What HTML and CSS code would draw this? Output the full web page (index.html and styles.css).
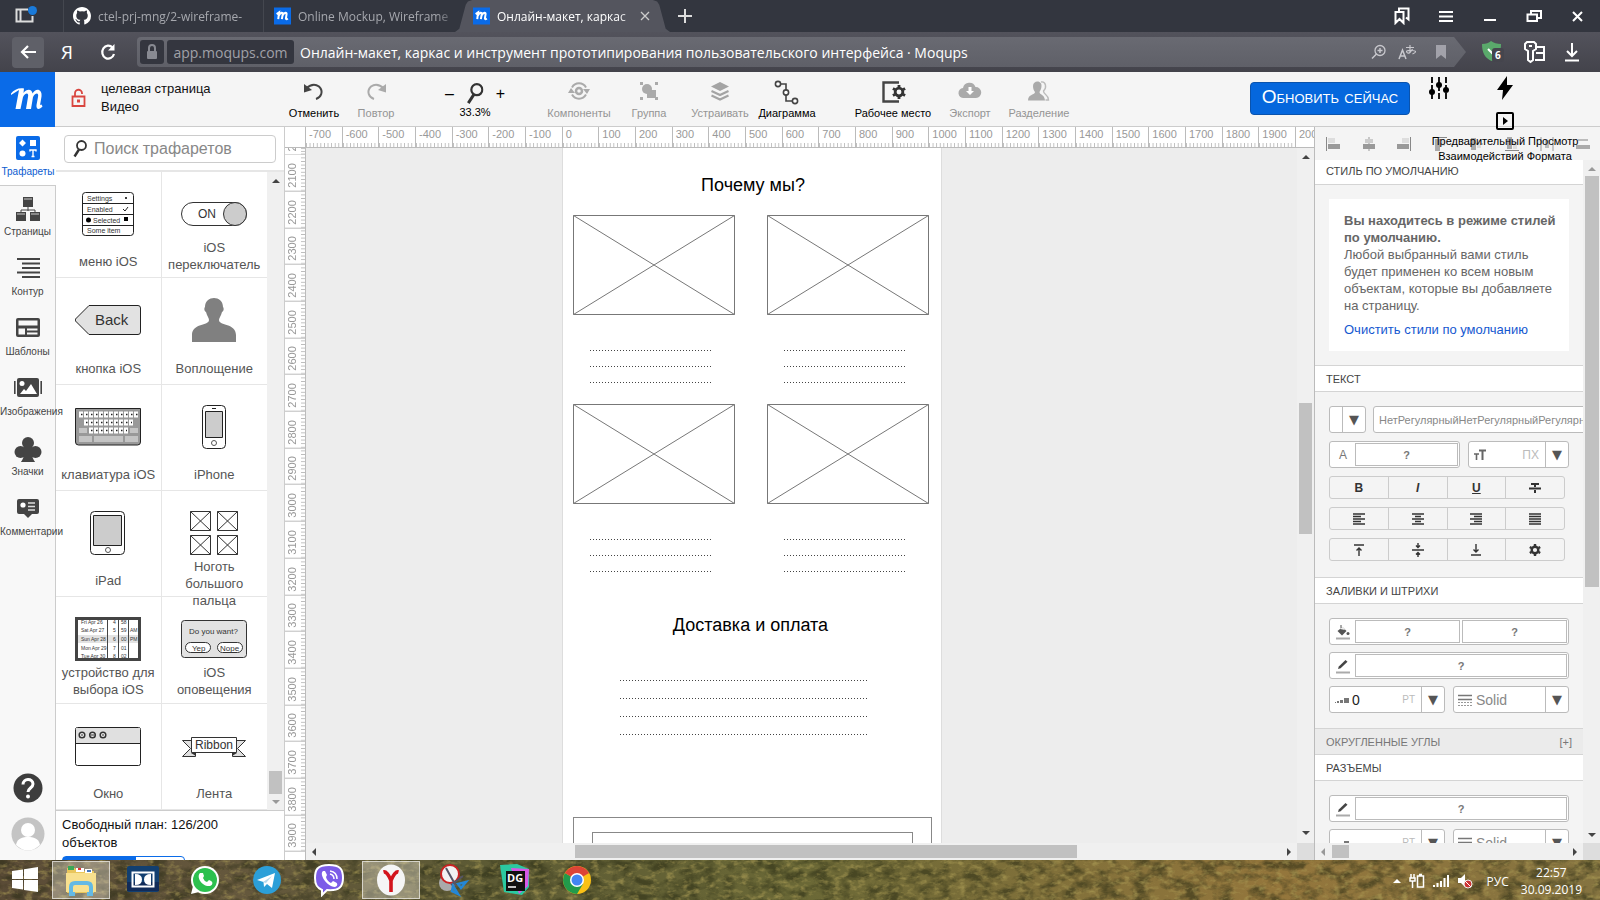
FILE: index.html
```html
<!DOCTYPE html>
<html lang="ru">
<head>
<meta charset="utf-8">
<title>Онлайн-макет · Moqups</title>
<link rel="stylesheet" href="styles.css">
</head>
<body>
<svg class="defs" aria-hidden="true">
  <symbol id="m" viewBox="0 0 16 16"><rect width="16" height="16" fill="#0a6be8"/><path d="M2.5 6.2 4.8 4.6 4 11M4.6 7.5C6 4.5 8.600 4 8.200 6.500L7.400 11M8.200 7.200C10 4.300 12.200 4.300 11.800 6.500L11.200 10.300Q11.400 11.600 13 10.300" fill="none" stroke="#fff" stroke-width="1.900"/></symbol>
  <symbol id="pencil" viewBox="0 0 14 16"><path d="M2 11l.8-2.600L9.500 2l2 1.800L4.600 10.300z" fill="#444"/><path d="M0 14.500h14" stroke="#aaa" stroke-width="2"/></symbol>
  <symbol id="weight" viewBox="0 0 14 8"><path d="M0 6h1v1H0zM2 5h2v2H2zM5 4h3v3H5zM9 2h5v5H9z" fill="#777"/></symbol>
  <symbol id="dash" viewBox="0 0 14 12"><path d="M0 1.500h14M0 5.500h14" stroke="#777" stroke-width="1.500"/><path d="M0 8.500h14M0 11.500h14" stroke="#999" stroke-dasharray="2 1"/></symbol>
  <symbol id="xbox" viewBox="0 0 162 100"><path d="M.5.5h161v99H.5zL161.500 99.500M161.500.5.5 99.500" fill="none" stroke="#777"/></symbol>
  <symbol id="lupa" viewBox="0 0 14 18"><circle cx="8.500" cy="5.500" r="4.500" fill="none" stroke="#333" stroke-width="1.800"/><path d="M6 9.500 1.500 16.500" stroke="#333" stroke-width="2.400"/></symbol>
  <symbol id="gear" viewBox="0 0 12 12"><circle cx="6" cy="6" r="3.300" fill="none" stroke="#333" stroke-width="2.400"/><path d="M6 0v2M6 10v2M.8 3l1.700 1M9.500 8l1.700 1M.8 9l1.700-1M9.500 4l1.700-1" stroke="#333" stroke-width="2.400"/></symbol>
</svg>

<header class="tabs">
  <button class="panel-btn" aria-label="Панель"><svg width="24" height="20"><path d="M14 3.500H2.500v12h16V10M6.500 4v11" fill="none" stroke="#ddd" stroke-width="2"/><circle cx="18.500" cy="4.500" r="4.500" fill="#1a7ad9"/></svg></button>
  <a class="tab first" href="#"><svg width="18" height="18" viewBox="0 0 16 16"><path fill="#fff" d="M8 0C3.580 0 0 3.580 0 8c0 3.540 2.290 6.530 5.470 7.590.4.070.55-.17.55-.38v-1.490c-2.230.48-2.700-1.070-2.700-1.070-.36-.92-.89-1.170-.89-1.170-.73-.5.060-.49.060-.49.800.060 1.230.82 1.230.82.710 1.230 1.870.87 2.330.67.070-.52.280-.87.500-1.070-1.780-.2-3.640-.89-3.640-3.950 0-.87.310-1.590.82-2.150-.08-.2-.36-1.020.08-2.120 0 0 .67-.21 2.200.82a7.600 7.600 0 0 1 4 0c1.530-1.040 2.200-.82 2.200-.82.440 1.100.16 1.920.080 2.120.51.56.82 1.270.82 2.150 0 3.070-1.870 3.750-3.650 3.950.29.250.54.730.54 1.480v2.200c0 .21.150.46.550.38A8 8 0 0 0 16 8c0-4.420-3.580-8-8-8z"/></svg><span>ctel-prj-mng/2-wireframe-</span></a>
  <a class="tab second" href="#"><svg width="17" height="20"><use href="#m"/></svg><span>Online Mockup, Wireframe</span></a>
  <div class="tab active"><svg width="17" height="20"><use href="#m"/></svg><span>Онлайн-макет, каркас</span><button aria-label="Закрыть вкладку"><svg width="10" height="10"><path d="M1 1l8 8M9 1l-8 8" stroke="#ccc" stroke-width="1.300"/></svg></button></div>
  <button class="plus" aria-label="Новая вкладка"><svg width="16" height="16"><path d="M8 1v14M1 8h14" stroke="#ddd" stroke-width="2"/></svg></button>
  <div class="win">
    <button aria-label="Закладки"><svg width="16" height="18"><path d="M5 4V1.500h9.500v11L12 10.500M1.500 5h8v11l-4-4-4 4z" fill="none" stroke="#fff" stroke-width="2"/></svg></button>
    <button aria-label="Меню"><svg width="16" height="18"><path d="M1 5h14M1 9.500h14M1 14h14" stroke="#fff" stroke-width="2"/></svg></button>
    <button aria-label="Свернуть"><svg width="16" height="18"><path d="M2 13h12" stroke="#fff" stroke-width="2"/></svg></button>
    <button aria-label="Восстановить"><svg width="16" height="18"><path d="M5 7V4h10v7h-3M1.500 7.500H11V14H1.500z" fill="none" stroke="#fff" stroke-width="2"/></svg></button>
    <button aria-label="Закрыть"><svg width="16" height="18"><path d="M3 5l9 9M12 5l-9 9" stroke="#fff" stroke-width="2"/></svg></button>
  </div>
</header>

<nav class="address">
  <button class="back" aria-label="Назад"><svg width="18" height="16"><path d="M9 2 3 8l6 6M3 8h14" fill="none" stroke="#fff" stroke-width="2.200"/></svg></button>
  <button class="ya" aria-label="Яндекс">Я</button>
  <button class="reload" aria-label="Обновить"><svg width="18" height="20"><path d="M13.500 5.500A6 6.500 0 1 0 15 12" fill="none" stroke="#fff" stroke-width="2.200"/><path d="M15.500 2v6.500H9z" fill="#fff"/></svg></button>
  <div class="url">
    <span class="lock"><svg width="12" height="16"><path d="M3 7V4a3 3 0 0 1 6 0v3" fill="none" stroke="#888a92" stroke-width="2"/><rect x="1" y="7" width="10" height="8" rx="1" fill="#888a92"/></svg></span>
    <span class="domain">app.moqups.com</span>
    <span class="url-title">Онлайн-макет, каркас и инструмент прототипирования пользовательского интерфейса · Moqups</span>
    <svg width="16" height="16"><circle cx="9" cy="6.500" r="5" fill="none" stroke="#c8c8cd" stroke-width="1.300"/><path d="M9 4v5M6.500 6.500h5M5.500 10 1 14.500" stroke="#c8c8cd" stroke-width="1.500"/></svg>
    <svg class="translate" width="18" height="16"><path d="M1 15 4.500 6 8 15M2.200 12h4.600" fill="none" stroke="#c8c8cd" stroke-width="1.500"/><path d="M8 3.500h8M12 1v8M14.500 5Q11 11 9 8.500T14 6.500 14.500 10" fill="none" stroke="#c8c8cd" stroke-width="1.200"/></svg>
    <svg width="10" height="14"><path d="M0 0h10v14l-5-4-5 4z" fill="#a2a2aa"/></svg>
  </div>
  <div class="ext">
    <svg width="26" height="24"><path d="M2 4Q8 4 11 1q4 3 10 3c0 9-3 14-9.500 17C5 18 2 13 2 4z" fill="#5aa96b"/><path d="m8 9 4 4 4-4" fill="none" stroke="#fff" stroke-width="2"/><rect x="12" y="8" width="12" height="14" rx="3" fill="#45454d"/><text x="15" y="19" class="badge">6</text></svg>
    <svg width="24" height="24"><path d="M4 2h7l2 2v5l-3 2v9l-2.500 2L5 20v-9L2 9V4zM6 6h3M13 7h8v13h-9M13 13h8" fill="none" stroke="#fff" stroke-width="2"/></svg>
    <svg width="16" height="20"><path d="M8 1v13M3 9l5 5 5-5M1 18.500h14" fill="none" stroke="#fff" stroke-width="2"/></svg>
  </div>
</nav>

<div class="toolbar">
  <a class="logo" href="#" aria-label="Moqups"><svg width="55" height="55" viewBox="0 0 55 55"><path d="M11 23l8-5-3.500 19h5L23 25c3-5 6-4 5 0l-2 12h5l2-12c3-5 6-4 5 0l-1.500 8c-.5 5 3 5 6 1.500l-1-2c-1.500 1-1.500 0-1-2l1-6c1-8-6-9-9-3-.5-5-6-5-9-.5l.5-4.500c-5-1-10 1-13 5z" fill="#fff"/></svg></a>
  <svg class="padlock" width="16" height="20"><path d="M4 8.500V5.500a3.500 3.500 0 0 1 7-.5v1M1.500 8.500h12V18h-12z" fill="none" stroke="#d9463f" stroke-width="1.800"/><rect x="6" y="11.500" width="3" height="3" fill="#d9463f"/></svg>
  <div class="doc"><div>целевая страница</div><div>Видео</div></div>
  <button class="tool w62 on"><svg width="22" height="22"><path d="M3 8.500Q10 2 16 6.500c5 5 2 11-3 12.500" fill="none" stroke="#444" stroke-width="2"/><path d="M1 4v8.500l8-2.500z" fill="#444"/></svg>Отменить</button>
  <button class="tool w62"><svg width="22" height="22"><path d="M19 8.500Q12 2 6 6.500c-5 5-2 11 3 12.500" fill="none" stroke="#aaa" stroke-width="2"/><path d="M21 4v8.500l-8-2.500z" fill="#aaa"/></svg>Повтор</button>
  <div class="zoom"><div class="zoom-row"><button aria-label="Уменьшить">–</button><svg width="18" height="22" viewBox="0 0 14 18"><use href="#lupa"/></svg><button aria-label="Увеличить">+</button></div>33.3%</div>
  <button class="tool w72"><svg width="22" height="22"><path d="M4 7.500a8 8 0 0 1 14 0M18 14.500a8 8 0 0 1-14 0" fill="none" stroke="#aaa" stroke-width="2"/><path d="M0 13l3-5 4 5zM22 9l-3 5-4-5z" fill="#aaa"/><circle cx="11" cy="11" r="3" fill="none" stroke="#aaa" stroke-width="2.500"/></svg>Компоненты</button>
  <button class="tool w68"><svg width="22" height="22"><path d="M2 2h3v3H2zM17 2h3v3h-3zM2 17h3v3H2zM17 17h3v3h-3zM9 10h9v8H9z" fill="#aaa"/><circle cx="9" cy="9" r="5" fill="#aaa"/></svg>Группа</button>
  <button class="tool w74"><svg width="22" height="22"><path d="M11 2l9 4.500-9 4.500-9-4.500z" fill="#a4a4a4"/><path d="M2.500 11l8.500 4 8.500-4M2.500 15.500l8.500 4 8.500-4" fill="none" stroke="#a4a4a4" stroke-width="2.200"/></svg>Устраивать</button>
  <button class="tool w60 on"><svg width="26" height="26"><path d="M5 4h7v17h8" fill="none" stroke="#444" stroke-width="1.600"/><g fill="#fff" stroke="#444" stroke-width="1.600"><circle cx="4" cy="4" r="2.600"/><circle cx="12" cy="12.500" r="2.600"/><circle cx="21" cy="21" r="2.600"/></g></svg>Диаграмма</button>
  <button class="tool w92 gap on"><svg width="26" height="24"><path d="M19 2.500H3.500v19H19" fill="none" stroke="#444" stroke-width="2.400"/><use href="#gear" x="12" y="5" width="14" height="14"/></svg>Рабочее место</button>
  <button class="tool w62"><svg width="24" height="20"><path d="M6 18a5 5 0 0 1-1-10 6.500 6.500 0 0 1 12.500-1A5.500 5.500 0 0 1 18 18z" fill="#aaa"/><path d="M10.500 7h3v4H16l-4 4-4-4h2.500z" fill="#fff"/></svg>Экспорт</button>
  <button class="tool w76"><svg width="24" height="22"><path d="M14 2c5-1 6 6 2.500 9 0 4 5 3 5 9h-3" fill="none" stroke="#bbb" stroke-width="1.400"/><path d="M6 6c0-6 9-6 8.500 0 0 3-1.500 5-2 6 0 3 5 2 5.500 8.500H1C1 14 8 15 8 12 7 11 6 9 6 6z" fill="#aaa"/></svg>Разделение</button>
  <div class="spacer"></div>
  <button class="upgrade">Обновить сейчас</button>
  <button class="sliders" aria-label="Настройки"><svg width="22" height="24"><path d="M4 1v22M11 1v22M18 1v22" stroke="#000" stroke-width="1.800" stroke-dasharray="6 2"/><circle cx="4" cy="16" r="3" /><circle cx="11" cy="9" r="3"/><circle cx="18" cy="14" r="3"/></svg></button>
  <div class="preview">
    <svg width="18" height="24"><path d="M11 0 1 14h6L6 24 17 9h-6z"/></svg>
    <button><svg width="18" height="18"><rect x="1" y="1" width="16" height="16" rx="1" fill="none" stroke="#000" stroke-width="2"/><path d="M7 5l5 4-5 4z"/></svg><span>Предварительный Просмотр Взаимодействий Формата</span></button>
  </div>
</div>

<main class="app">
  <nav class="rail">
    <a class="active" href="#"><svg width="24" height="24"><rect width="24" height="24" rx="2" fill="#0a6be8"/><path d="M6.500 3.500 10 7l-3.500 3.500L3 7zM14 4h6v6h-6z" fill="#fff"/><circle cx="6.500" cy="17.500" r="3" fill="#fff"/><path d="M14 15.500v-1.500h6v1.500M17 14v6.500M15.500 20.500h3" fill="none" stroke="#fff" stroke-width="1.400"/></svg>Трафареты</a>
    <a href="#"><svg width="24" height="26"><path d="M12 11v4M5 16v-2h14v2" fill="none" stroke="#444"/><path d="M7 1h10v10H7zM0 16h10v9H0zM14 16h10v9H14z" fill="#444"/><path d="M8 3h8M1 18h8M15 18h8" stroke="#ccc"/></svg>Страницы</a>
    <a href="#"><svg width="24" height="24"><path d="M1 3h23M6 7.500h18M6 12h18M1 16.500h23M6 21h18" stroke="#444" stroke-width="2"/></svg>Контур</a>
    <a href="#"><svg width="24" height="24"><rect y="2" width="24" height="19" rx="2" fill="#444"/><path d="M2.500 4.500h19v5h-19zM2.500 12.500H9v6H2.500zM11 12.500h10.500v2H11zM11 16.500h10.500v2H11z" fill="#f8f8f8"/></svg>Шаблоны</a>
    <a href="#"><svg width="28" height="24"><rect x="3" y="2" width="22" height="19" rx="2" fill="#444"/><path d="M.8 5v13M27.200 5v13" stroke="#444" stroke-width="1.600"/><circle cx="8" cy="7.500" r="2.500" fill="#fff"/><path d="m6 18 4-5 2 2 5-7 6 10z" fill="#fff"/></svg>Изображения</a>
    <a href="#"><svg width="28" height="28"><circle cx="14" cy="7" r="6" fill="#444"/><circle cx="6.500" cy="16" r="6" fill="#444"/><circle cx="21.500" cy="16" r="6" fill="#444"/><path d="M10 11h8v6c0 5 2 8 4 10H6c2-2 4-5 4-10z" fill="#444"/></svg>Значки</a>
    <a href="#"><svg width="24" height="24"><path d="M3 3h18q2 0 2 2v11q0 2-2 2h-5l-4 4-4-4H3q-2 0-2-2V5q0-2 2-2z" fill="#444"/><circle cx="7" cy="9" r="2.600" fill="#fff"/><path d="M12 7h7M12 10.500h7M12 14h7" stroke="#ddd" stroke-width="1.500"/></svg>Комментарии</a>
    <div class="rail-end">
      <button aria-label="Помощь"><svg width="30" height="30"><circle cx="15" cy="15" r="14.500" fill="#3d3d3d"/><path d="M10 11.500C10 5 20 5 20 11c0 4-5 4-5 8" fill="none" stroke="#fff" stroke-width="3"/><circle cx="15" cy="23.500" r="2" fill="#fff"/></svg></button>
      <svg width="34" height="34"><circle cx="17" cy="17" r="16.500" fill="#c4c4c4"/><circle cx="17" cy="13" r="7" fill="#fff"/><path d="M5 28c1-7 7-8 12-8s11 1 12 8q-12 11-24 0z" fill="#fff"/></svg>
    </div>
  </nav>

  <aside class="stencils">
    <label class="search"><svg width="14" height="18"><use href="#lupa"/></svg><input type="search" placeholder="Поиск трафаретов" aria-label="Поиск трафаретов"></label>
    <div class="list">
      <div class="cells">
        <div class="cell"><svg width="66" height="46" viewBox="0 0 66 46"><rect x="7.500" y="1.500" width="51" height="43" rx="3" fill="#fff" stroke="#222"/><path d="M8 12.500h50M8 23.500h50M8 34.500h50" stroke="#222"/><g class="tiny"><text x="12" y="10">Settings</text><text x="12" y="21">Enabled</text><text x="18" y="32">Selected</text><text x="12" y="42">Some item</text></g><circle cx="13.500" cy="29" r="2.500"/><circle cx="51" cy="7" r="1"/><path d="m48 18 2 2 3-4" fill="none" stroke="#222"/><rect x="49" y="26" width="4" height="4"/></svg><span>меню iOS</span></div>
        <div class="cell"><svg width="66" height="46" viewBox="0 0 66 46"><rect x=".5" y="11.500" width="65" height="23" rx="11.500" fill="#fff" stroke="#333"/><circle cx="54" cy="23" r="11.500" fill="#ccc" stroke="#333"/><text x="17" y="27" class="t12">ON</text></svg><span>iOS переключатель</span></div>
        <div class="cell"><svg width="66" height="46" viewBox="0 0 66 46"><path d="M14 8.500h49q2.500 0 2.500 2.500v24q0 2.500-2.500 2.500H14L.5 24q-.5-1 0-2z" fill="#e2e2e2" stroke="#222"/><text x="20" y="28" class="t15">Back</text></svg><span>кнопка iOS</span></div>
        <div class="cell"><svg width="66" height="46" viewBox="0 0 66 46"><path d="M24 10C24-2 42-2 42 10c1 1 1 4-1 5-1 4-3 6-3 8 0 6 17 3 17 15v7H11v-7c0-12 17-9 17-15 0-2-2-4-3-8-2-1-2-4-1-5z" fill="#808080"/></svg><span>Воплощение</span></div>
        <div class="cell"><svg width="66" height="46" viewBox="0 0 66 46"><path d="M.5 4.500h65V38q0 3-3 3h-59q-3 0-3-3z" fill="#999" stroke="#222"/><path d="M4 10.500h59" stroke="#fff" stroke-width="6" stroke-dasharray="4 1"/><path d="M9 18.500h49" stroke="#fff" stroke-width="6" stroke-dasharray="4 1"/><path d="M14 26.500h39" stroke="#fff" stroke-width="6" stroke-dasharray="4 1"/><path d="M6 10.500h57M11 18.500h46M16 26.500h36" stroke="#222" stroke-width="1.500" stroke-dasharray="1.500 3.500"/><path d="M4 24h8v5H4zM55 24h8v5h-8zM4 32h13v6H4zM19 32h29v6H19zM50 32h13v6H50z" fill="#c4c4c4"/></svg><span>клавиатура iOS</span></div>
        <div class="cell"><svg width="66" height="46" viewBox="0 0 66 46"><rect x="21.500" y="1.500" width="23" height="43" rx="4" fill="#fff" stroke="#222"/><path d="M24.500 7.500h17v26h-17z" fill="#ccc" stroke="#222"/><path d="M31 4.500h4" stroke="#222"/><circle cx="33" cy="39" r="2.500" fill="none" stroke="#555"/></svg><span>iPhone</span></div>
        <div class="cell"><svg width="66" height="46" viewBox="0 0 66 46"><rect x="15.500" y="1.500" width="34" height="43" rx="4" fill="#fff" stroke="#222"/><path d="M18.500 5.500h28v30h-28z" fill="#ccc" stroke="#222"/><circle cx="33" cy="40" r="2.500" fill="none" stroke="#555"/></svg><span>iPad</span></div>
        <div class="cell"><svg width="66" height="46" viewBox="0 0 66 46"><path d="M9.500 1.500h20v19h-20zl20 19m0-19-20 19M36.500 1.500h20v19h-20zl20 19m0-19-20 19M9.500 25.500h20v19h-20zl20 19m0-19-20 19M36.500 25.500h20v19h-20zl20 19m0-19-20 19" fill="none" stroke="#333"/></svg><span>Ноготь большого пальца</span></div>
        <div class="cell"><svg width="66" height="46" viewBox="0 0 66 46"><rect x="1.500" y="2.500" width="63" height="41" fill="#fff" stroke="#444" stroke-width="3"/><path d="M3 19h60v8H3z" fill="#e3e3e3"/><path d="M32.500 4v38M43.500 4v38M53.500 4v38" stroke="#444"/><g class="micro"><text x="6" y="8">Fri   Apr 26</text><text x="6" y="16">Sat  Apr 27</text><text x="6" y="25">Sun Apr 28</text><text x="6" y="34">Mon Apr 29</text><text x="6" y="42">Tue Apr 30</text><text x="38" y="8">4</text><text x="38" y="16">5</text><text x="38" y="25">6</text><text x="38" y="34">7</text><text x="38" y="42">8</text><text x="46" y="8">58</text><text x="46" y="16">59</text><text x="46" y="25">00</text><text x="46" y="34">01</text><text x="46" y="42">02</text><text x="55" y="16">AM</text><text x="55" y="25">PM</text></g></svg><span>устройство для выбора iOS</span></div>
        <div class="cell"><svg width="66" height="46" viewBox="0 0 66 46"><rect x=".5" y="4.500" width="65" height="37" rx="3" fill="#e2e2e2" stroke="#333"/><rect x="4.500" y="26.500" width="25" height="10" rx="5" fill="#fff" stroke="#333"/><rect x="36.500" y="26.500" width="25" height="10" rx="5" fill="#fff" stroke="#333"/><g class="t8"><text x="8" y="18">Do you want?</text><text x="11" y="35">Yep</text><text x="39" y="35">Nope</text></g></svg><span>iOS оповещения</span></div>
        <div class="cell"><svg width="66" height="46" viewBox="0 0 66 46"><rect x=".5" y="4.500" width="65" height="38" rx="2" fill="#fff" stroke="#222"/><path d="M1 5h64v15H1z" fill="#e0e0e0"/><path d="M1 20.500h64" stroke="#222"/><g fill="#eee" stroke="#333" stroke-width="1.500"><circle cx="7" cy="12" r="2.800"/><circle cx="17.500" cy="12" r="2.800"/><circle cx="28" cy="12" r="2.800"/></g><path d="M15.500 12h4M6 12h2M27 12h2" stroke="#333"/></svg><span>Окно</span></div>
        <div class="cell"><svg width="66" height="46" viewBox="0 0 66 46"><path d="M1.500 17.500h13v16h-13l8-8zM64.500 17.500h-13v16h13l-8-8z" fill="#e0e0e0" stroke="#333"/><path d="M10.500 14.500h45v15h-45z" fill="#fff" stroke="#333"/><path d="M10 30h5v3zM56 30h-5v3z" fill="#333"/><text x="14" y="26" class="t12">Ribbon</text></svg><span>Лента</span></div>
      </div>
      <div class="vbar"><i class="up"></i><i class="thumb"></i><i class="down grey"></i></div>
    </div>
    <div class="plan"><p>Свободный план: 126/200 объектов</p><div class="meter"></div></div>
  </aside>

  <section class="work">
    <div class="hruler"><div class="corner"></div><div class="hscale"><span>-700</span><span>-600</span><span>-500</span><span>-400</span><span>-300</span><span>-200</span><span>-100</span><span>0</span><span>100</span><span>200</span><span>300</span><span>400</span><span>500</span><span>600</span><span>700</span><span>800</span><span>900</span><span>1000</span><span>1100</span><span>1200</span><span>1300</span><span>1400</span><span>1500</span><span>1600</span><span>1700</span><span>1800</span><span>1900</span></div><div class="hlast">2000</div></div>
    <div class="stage">
      <div class="vruler"><div class="vfirst"><span>2000</span></div><div class="vscale"><span>2100</span><span>2200</span><span>2300</span><span>2400</span><span>2500</span><span>2600</span><span>2700</span><span>2800</span><span>2900</span><span>3000</span><span>3100</span><span>3200</span><span>3300</span><span>3400</span><span>3500</span><span>3600</span><span>3700</span><span>3800</span><span>3900</span></div><div class="vlast"></div></div>
      <div class="view">
        <div class="canvas">
          <div class="artboard">
            <h2>Почему мы?</h2>
            <div class="pics">
              <div class="pic"><svg width="162" height="100"><use href="#xbox"/></svg><i></i><i></i><i></i></div>
              <div class="pic"><svg width="162" height="100"><use href="#xbox"/></svg><i></i><i></i><i></i></div>
              <div class="pic"><svg width="162" height="100"><use href="#xbox"/></svg><i></i><i></i><i></i></div>
              <div class="pic"><svg width="162" height="100"><use href="#xbox"/></svg><i></i><i></i><i></i></div>
            </div>
            <h2>Доставка и оплата</h2>
            <div class="lines"><i></i><i></i><i></i><i></i></div>
            <div class="form"><div class="field">Имя</div></div>
          </div>
        </div>
        <div class="hbar"><i class="left"></i><i class="thumb"></i><i class="right"></i></div>
      </div>
      <div class="vbar main"><i class="up"></i><i class="thumb"></i><i class="down"></i><b></b></div>
    </div>
  </section>

  <aside class="props">
    <div class="align">
      <svg width="14" height="14"><path d="M.5 0v14" stroke="#888"/><path d="M2 1h7v5H2z" fill="#ddd"/><path d="M2 7h12v5H2z" fill="#999"/></svg>
      <svg width="14" height="14"><path d="M7 0v14" stroke="#999"/><path d="M3 2h8v4H3z" fill="#ccc"/><path d="M1 7h12v5H1z" fill="#999"/></svg>
      <svg width="14" height="14"><path d="M13.500 0v14" stroke="#888"/><path d="M5 1h7v5H5z" fill="#ddd"/><path d="M0 7h12v5H0z" fill="#999"/></svg>
      <svg width="14" height="14"><path d="M0 .5h14" stroke="#888"/><path d="M2 2h5v12H2z" fill="#aaa"/><path d="M8 2h4v7H8z" fill="#ddd"/></svg>
      <svg width="14" height="14"><path d="M0 7h14" stroke="#999"/><path d="M2 1h5v12H2z" fill="#aaa"/><path d="M8 3h4v8H8z" fill="#ddd"/></svg>
      <svg width="14" height="14"><path d="M0 13.500h14" stroke="#888"/><path d="M2 0h5v12H2z" fill="#aaa"/><path d="M8 5h4v7H8z" fill="#ddd"/></svg>
      <svg width="14" height="14"><path d="M1 0v14M13 0v14" stroke="#999"/><path d="M5 3h4v8H5z" fill="#bbb"/></svg>
      <svg width="14" height="14"><path d="M2 3h10" stroke="#bbb" stroke-width="2"/><path d="M0 8h14v4H0z" fill="#aaa"/></svg>
    </div>
    <div class="props-row">
      <div class="props-body">
        <h3 class="head top">СТИЛЬ ПО УМОЛЧАНИЮ</h3>
        <div class="group info-wrap"><div class="info"><b>Вы находитесь в режиме стилей по умолчанию.</b><br>Любой выбранный вами стиль будет применен ко всем новым объектам, которые вы добавляете на страницу.<a href="#">Очистить стили по умолчанию</a></div></div>
        <h3 class="head">ТЕКСТ</h3>
        <div class="group text-group">
          <div class="row"><div class="box tinybox"><input aria-label="Шрифт"><button class="arr" aria-label="Выбрать шрифт">▼</button></div><button class="box fontbtn">НетРегулярныйНетРегулярныйРегулярный</button></div>
          <div class="row"><div class="box color short"><span class="ic">A</span><button>?</button></div><div class="box size"><svg width="12" height="12"><path d="M5 1.500h7M8.500 1v10" stroke="#666" stroke-width="2"/><path d="M0 5h5M2.500 5v6" stroke="#666" stroke-width="1.600"/></svg><input aria-label="Размер"><span class="unit">ПХ</span><button class="arr" aria-label="Выбрать размер">▼</button></div></div>
          <div class="seg"><button><b>B</b></button><button><b><em>I</em></b></button><button><b><u>U</u></b></button><button aria-label="Зачёркнутый"><svg width="12" height="12"><path d="M2 2h8M0 6.500h12M6 2v3M6 8v3" stroke="#333" stroke-width="2"/></svg></button></div>
          <div class="seg"><button aria-label="Влево"><svg width="12" height="12"><path d="M0 1h12M0 3.500h8M0 6h12M0 8.500h8M0 11h12" stroke="#333" stroke-width="1.300"/></svg></button><button aria-label="По центру"><svg width="12" height="12"><path d="M0 1h12M3 3.500h6M0 6h12M3 8.500h6M0 11h12" stroke="#333" stroke-width="1.300"/></svg></button><button aria-label="Вправо"><svg width="12" height="12"><path d="M0 1h12M4 3.500h8M0 6h12M4 8.500h8M0 11h12" stroke="#333" stroke-width="1.300"/></svg></button><button aria-label="По ширине"><svg width="12" height="12"><path d="M0 1h12M0 3.500h12M0 6h12M0 8.500h12M0 11h12" stroke="#333" stroke-width="1.300"/></svg></button></div>
          <div class="seg"><button aria-label="Вверх"><svg width="12" height="12"><path d="M1 1h10M6 12V4M3.500 6.500 6 4l2.500 2.500" fill="none" stroke="#333" stroke-width="1.400"/></svg></button><button aria-label="Посередине"><svg width="12" height="14"><path d="M0 7h12M6 0v4M6 10v4M4 2.500l2 2 2-2M4 11.500l2-2 2 2" fill="none" stroke="#333" stroke-width="1.400"/></svg></button><button aria-label="Вниз"><svg width="12" height="12"><path d="M1 11h10M6 0v8M3.500 5.500 6 8l2.500-2.500" fill="none" stroke="#333" stroke-width="1.400"/></svg></button><button aria-label="Параметры"><svg width="12" height="12"><use href="#gear"/></svg></button></div>
        </div>
        <h3 class="head">ЗАЛИВКИ И ШТРИХИ</h3>
        <div class="group">
          <div class="box color"><span class="ic"><svg width="14" height="16"><path d="m1.500 7 5-4 4 4-4.500 4.500z" fill="#555"/><path d="m4 5 3-2.500L9 6z" fill="#eee"/><path d="M5 1v3" stroke="#555"/><circle cx="12" cy="9.500" r="1.500" fill="#555"/><path d="M0 14.500h14" stroke="#aaa" stroke-width="2"/></svg></span><button>?</button><button>?</button></div>
          <div class="box color"><span class="ic"><svg width="14" height="16"><use href="#pencil"/></svg></span><button>?</button></div>
          <div class="row"><div class="box stroke"><svg width="14" height="8"><use href="#weight"/></svg><input value="0" aria-label="Толщина"><span class="unit sm">PT</span><button class="arr" aria-label="Выбрать толщину">▼</button></div><div class="box solid"><svg width="14" height="12"><use href="#dash"/></svg><select aria-label="Тип линии"><option>Solid</option></select><span class="arr">▼</span></div></div>
        </div>
        <h3 class="head shut"><span>ОКРУГЛЕННЫЕ УГЛЫ</span><span>[+]</span></h3>
        <h3 class="head joined">РАЗЪЕМЫ</h3>
        <div class="group">
          <div class="box color"><span class="ic"><svg width="14" height="16"><use href="#pencil"/></svg></span><button>?</button></div>
          <div class="row"><div class="box stroke"><svg width="14" height="8"><use href="#weight"/></svg><input aria-label="Толщина разъема"><span class="unit sm">PT</span><button class="arr" aria-label="Выбрать толщину разъема">▼</button></div><div class="box solid"><svg width="14" height="12"><use href="#dash"/></svg><select aria-label="Тип линии разъема"><option>Solid</option></select><span class="arr">▼</span></div></div>
        </div>
      </div>
      <div class="vbar props-bar"><i class="up grey"></i><i class="thumb"></i><i class="down"></i></div>
    </div>
    <div class="props-foot"><div class="hbar"><i class="left grey"></i><i class="thumb"></i><i class="right"></i></div><b></b></div>
  </aside>
</main>

<footer class="taskbar">
  <svg class="grass" width="100%" height="100%" aria-hidden="true"><filter id="n" x="0" y="0" width="100%" height="100%" color-interpolation-filters="sRGB"><feTurbulence type="fractalNoise" baseFrequency=".06 .1" numOctaves="4" seed="4"/><feColorMatrix values="0 0 0 0 .16  0 0 0 0 .17  0 0 0 0 .08  3 0 0 0 -1.2"/></filter><filter id="l" x="0" y="0" width="100%" height="100%" color-interpolation-filters="sRGB"><feTurbulence type="fractalNoise" baseFrequency=".12 .2" numOctaves="3" seed="9"/><feColorMatrix values="0 0 0 0 .68  0 0 0 0 .62  0 0 0 0 .34  3 0 0 0 -1.5"/></filter><rect width="100%" height="100%" filter="url(#n)" opacity=".55"/><rect width="100%" height="100%" filter="url(#l)" opacity=".6"/></svg>
  <button class="start" aria-label="Пуск"><svg width="26" height="26"><path d="M0 4l11-1.500V12H0zM12 2.300 26 0v12H12zM0 13h11v9.500L0 21zM12 13h14v12l-14-2z" fill="#fff"/></svg></button>
  <button class="app-btn open" aria-label="Проводник"><svg width="34" height="32"><path d="M3 4h8l2 3h17v22H3z" fill="#e9c65c"/><path d="M4 2h6v4H4z" fill="#3aa757"/><path d="M12 4h8v4h-8z" fill="#fff"/><path d="M21 5h7v4h-7z" fill="#fff"/><path d="M14 4h3v2h-3z" fill="#d33"/><path d="M23 6h4v2h-4z" fill="#47b"/><path d="M2 9h30v19H2z" fill="#f8e08e"/><path d="M7 30v-7q0-4 4-4h12q4 0 4 4v7M5 30h6M23 30h6" fill="none" stroke="#64b9e4" stroke-width="4"/></svg></button>
  <button class="app-btn" aria-label="Dolby"><svg width="32" height="28"><rect width="32" height="26" rx="2" fill="#123f70"/><path d="M0 16h32v9H0z" fill="#112b59"/><rect x="5.500" y="6.500" width="21" height="14" fill="none" stroke="#fff" stroke-width="2"/><path d="M8 8q7 0 7 5.500T8 19zM24 8q-7 0-7 5.500t7 5.500z" fill="#fff"/></svg></button>
  <button class="app-btn" aria-label="WhatsApp"><svg width="30" height="30"><circle cx="15" cy="15" r="14" fill="#fff"/><path d="m1 29 2-8 6 6z" fill="#fff"/><circle cx="15" cy="15" r="12" fill="#2cc04e"/><path d="M10 8c-4 4 2 14 10 13 3-1 3-4 1-5l-2-1-2 2q-3-1-4-4l1-2-1-3z" fill="#fff"/></svg></button>
  <button class="app-btn" aria-label="Telegram"><svg width="30" height="30"><circle cx="15" cy="15" r="14" fill="#2c9fd8"/><path d="m5 15 18-7-3 15-5-4-3 3-.5-5z" fill="#fff"/><path d="m11 17 9-6-6 7" fill="#b8d8ec"/></svg></button>
  <button class="app-btn" aria-label="Viber"><svg width="32" height="34"><path d="M16 2C4 2 2 7 2 15c0 7 2 10 7 12v5l5-5c12 1 16-3 16-12C30 6 27 2 16 2z" fill="#7c5ce8" stroke="#fff" stroke-width="2"/><path d="M10 8c-4 3 3 15 12 16 3-1 3-4 0-5l-2-1-2 2q-4-2-5-6l1-2-2-4z" fill="#fff"/><path d="M17 8q7 1 7 8M17 11q4 1 4 5" fill="none" stroke="#fff" stroke-width="1.500"/></svg></button>
  <button class="app-btn open" aria-label="Яндекс Браузер"><svg width="30" height="34"><ellipse cx="15" cy="17" rx="14" ry="15.500" fill="#f5f5f5"/><path d="M7.500 9Q11 8 15 17.500 19 8 22.500 9M15 17v12" fill="none" stroke="#d3141c" stroke-width="3.600"/></svg></button>
  <button class="app-btn" aria-label="Ножницы"><svg width="32" height="34"><circle cx="10" cy="20" r="8" fill="#aaa"/><circle cx="13" cy="11" r="9" fill="#f2f2f2" stroke="#c22" stroke-width="2"/><path d="m9 5 10 18M26 13 14 22" stroke="#556" stroke-width="2"/><path d="m21 21 8-2-5 6zM16 23l5 8-6-3z" fill="none" stroke="#2487d6" stroke-width="2.500"/></svg></button>
  <button class="app-btn" aria-label="DataGrip"><svg width="32" height="34"><path d="M1 2 18 1l12 5v18l-7 8L5 29z" fill="#2bc9a0"/><path d="m12 5 18 1-1 17-9 8z" fill="#d858e6"/><rect x="7" y="8" width="19" height="20" fill="#111"/><text x="8" y="19" class="dg">DG</text><path d="M9 24h8" stroke="#fff" stroke-width="1.500"/></svg></button>
  <button class="app-btn" aria-label="Chrome"><svg width="30" height="32" viewBox="0 0 30 30"><circle cx="15" cy="15" r="14" fill="#fbc116"/><path d="M15 15 2.900 8A14 14 0 0 0 15 29l6-10z" fill="#229a4b"/><path d="M15 15 2.900 8a14 14 0 0 1 24.200 0z" fill="#dc4437"/><circle cx="15" cy="15" r="7" fill="#fff"/><circle cx="15" cy="15" r="5.500" fill="#4285f4"/></svg></button>
  <div class="tray">
    <svg width="8" height="6"><path d="M0 5h8L4 1z" fill="#fff"/></svg>
    <svg width="16" height="16"><path d="M2 1v4M5 1v4M1 5h5v3H1zM3.500 8v7M8.500 3h6v11h-6zM10 1.500h3" fill="none" stroke="#fff" stroke-width="1.500"/></svg>
    <svg width="16" height="14"><path d="M1 11v2M4.500 9v4M8 7v6M11.500 4v9M15 1v12" stroke="#fff" stroke-width="2"/></svg>
    <svg width="16" height="16"><path d="M1 5h3l4-4v13L4 10H1z" fill="#fff"/><circle cx="11" cy="11" r="4" fill="#c33" stroke="#eee"/><path d="m8 8 6 6" stroke="#fff"/></svg>
    <span class="lang">РУС</span>
    <span class="clock">22:57<br>30.09.2019</span>
  </div>
</footer>
</body>
</html>
```
FILE: styles.css
```css
* { box-sizing: border-box; }
body { margin: 0; height: 100vh; display: flex; flex-direction: column; overflow: hidden; font: 13px "Liberation Sans", Arial, sans-serif; color: #222; }
button, input, select { font: inherit; color: inherit; border: 0; padding: 0; margin: 0; background: none; min-width: 0; }
a { color: inherit; text-decoration: none; }
svg { display: block; flex: none; }
.defs { position: absolute; width: 0; height: 0; }
i { font-style: normal; }

/* browser chrome */
.tabs { height: 32px; flex: none; display: flex; align-items: center; background: #33363f; color: #a6a8ae; font-family: "Open Sans", sans-serif; font-size: 12px; }
.panel-btn { width: 63px; padding-left: 14px; }
.tab { height: 32px; display: flex; align-items: center; gap: 7px; }
.tab span { overflow: hidden; white-space: nowrap; flex: 1; -webkit-mask-image: linear-gradient(to right, #000 90%, rgba(0, 0, 0, .3)); mask-image: linear-gradient(to right, #000 90%, rgba(0, 0, 0, .3)); }
.first { width: 200px; padding: 0 6px 0 9px; border-left: 1px solid #44474f; }
.second { width: 192px; padding: 0 4px 0 10px; border-left: 1px solid #44474f; }
.active.tab { width: 215px; padding: 0 20px 0 18px; background: #54555e; color: #fff; clip-path: polygon(0 100%, 2% 90%, 5% 15%, 6% 5%, 8% 0, 92% 0, 94% 5%, 95% 15%, 98% 90%, 100% 100%); }
.plus { margin-left: 7px; }
.win { margin-left: auto; display: flex; gap: 28px; padding-right: 14px; }
.address { height: 40px; flex: none; display: flex; align-items: center; background: linear-gradient(#53535c, #43434b); color: #fff; padding: 0 20px 0 12px; font-family: "Open Sans", sans-serif; }
.back { width: 32px; height: 31px; border-radius: 4px; background: #5f6068; display: grid; place-items: center; }
.ya { width: 46px; font-size: 19px; }
.reload { width: 36px; display: grid; place-items: center; }
.url { flex: 1; height: 30px; margin-left: 11px; background: linear-gradient(#696a72, #5f6068); border-radius: 4px 0 0 4px; display: flex; align-items: center; padding: 0 20px 0 3px; gap: 3px; clip-path: polygon(0 0, calc(100% - 12px) 0, 100% 50%, calc(100% - 12px) 100%, 0 100%); }
.lock, .domain { height: 24px; background: #34363f; border-radius: 3px; display: grid; place-items: center; }
.lock { width: 24px; }
.domain { width: 127px; color: #a0a1a8; font-size: 14px; }
.url-title { flex: 1; font-size: 14px; white-space: nowrap; overflow: hidden; padding-left: 3px; }
.translate { margin: 0 17px 0 8px; }
.ext { display: flex; align-items: center; gap: 17px; margin-left: 14px; }
.badge { font: bold 10px "Open Sans", sans-serif; fill: #fff; }

/* application toolbar */
.toolbar { height: 55px; flex: none; display: flex; background: #f5f5f5; border-bottom: 1px solid #ccc; position: relative; z-index: 2; }
.logo { width: 55px; height: 55px; background: #0a6be8; }
.padlock { margin: 16px 0 0 16px; }
.doc { width: 196px; padding: 8px 0 0 14px; line-height: 18px; color: #111; }
.tool { display: flex; flex-direction: column; align-items: center; font-size: 11px; color: #949494; white-space: nowrap; padding-top: 8px; height: 54px; justify-content: space-between; padding-bottom: 7px; }
.tool svg { height: 26px; overflow: visible; }
.on { color: #000; }
.w60 { width: 60px; } .w62 { width: 62px; } .w68 { width: 68px; } .w72 { width: 72px; } .w74 { width: 74px; } .w76 { width: 76px; } .w92 { width: 92px; }
.gap { margin-left: 30px; }
.zoom { width: 136px; text-align: center; font-size: 11px; color: #000; padding-top: 9px; }
.zoom-row { display: flex; justify-content: center; align-items: center; gap: 12px; font-size: 16px; height: 25px; }
.spacer { flex: 1; }
.upgrade { width: 160px; height: 33px; margin-top: 10px; padding-bottom: 3px; background: #0567dd; border: 1px solid #0a53ad; border-radius: 4px; color: #fff; font-size: 19px; font-variant: small-caps; white-space: nowrap; }
.sliders { margin: 4px 0 0 18px; height: 24px; }
.preview { width: 150px; margin-right: 20px; margin-left: -20px; display: flex; flex-direction: column; align-items: center; padding-top: 4px; pointer-events: none; }
.preview > button { display: flex; flex-direction: column; align-items: center; margin-top: 12px; color: #000; font-size: 11px; line-height: 15px; gap: 4px; pointer-events: auto; }
.preview span { width: 148px; }
.preview > svg { align-self: center; }

.app { flex: 1; min-height: 0; display: flex; }
.rail { width: 56px; flex: none; background: #f8f8f8; border-right: 1px solid #ccc; display: flex; flex-direction: column; position: relative; z-index: 1; }
.rail a { height: 60px; display: flex; flex-direction: column; align-items: safe center; justify-content: center; gap: 4px; font-size: 10px; line-height: 12px; color: #444; white-space: nowrap; padding-top: 2px; }
.rail a svg { height: 26px; align-self: center; }
.rail a.active { height: 59px; color: #0a5bd0; background: #fff; border-bottom: 1px solid #ccc; margin-right: -1px; }
.rail-end { margin-top: auto; display: flex; flex-direction: column; align-items: center; gap: 14px; padding-bottom: 9px; }

.stencils { width: 228px; flex: none; display: flex; flex-direction: column; background: #fff; }
.search { height: 28px; margin: 8px 8px 7px; border: 1px solid #ccc; border-radius: 4px; display: flex; align-items: center; padding-left: 8px; gap: 7px; }
.search input { flex: 1; font-size: 16px; outline: 0; }
.search input::placeholder { color: #888; }
.list { flex: 1; min-height: 0; display: flex; border-top: 2px solid #e6e6e6; }
.cells { flex: 1; display: grid; grid-template-columns: 1fr 1fr; grid-template-rows: repeat(6, 1fr); }
.cell { min-height: 0; border: 1px solid #e6e6e6; border-width: 0 1px 1px 0; display: flex; flex-direction: column; align-items: center; padding: 19px 4px 7px; color: #555; text-align: center; line-height: 17px; }
.cell:nth-child(2n) { border-right: 0; }
.cell svg { margin-bottom: 2px; }
.cell span { margin-top: auto; }
.tiny { font-size: 7px; } .micro { font-size: 5px; } .t8 { font-size: 8px; } .t12 { font-size: 12px; } .t15 { font-size: 15px; }
.cell text { fill: #333; }
.plan { height: 50px; flex: none; border-top: 1px solid #ccc; padding: 5px 6px 0; line-height: 18px; color: #111; overflow: hidden; }
.plan p { margin: 0; padding-right: 40px; }
.meter { width: 123px; height: 20px; margin-top: 4px; border: 1px solid #0a6be8; border-radius: 4px; background: linear-gradient(to right, #0a6be8 60%, #fff 60%); }

/* scrollbars */
.vbar { width: 17px; flex: none; background: #f0f0f0; display: flex; flex-direction: column; align-items: center; padding: 7px 0 6px; }
.hbar { height: 17px; flex: none; background: #f0f0f0; display: flex; align-items: center; padding: 0 6px; }
.up, .down { border: 4px solid transparent; height: 4px; }
.up { border-width: 0 4px 4px; border-bottom-color: #444; }
.down { border-width: 4px 4px 0; border-top-color: #444; }
.left { border: 4px solid transparent; border-left: 0; border-right-color: #444; }
.right { border: 4px solid transparent; border-right: 0; border-left-color: #444; }
.up.grey { border-bottom-color: #999; } .down.grey { border-top-color: #999; } .left.grey { border-right-color: #999; }
.thumb { background: #c1c1c1; }
.list .thumb { width: 13px; height: 23px; margin: auto 0 6px; }
.main .thumb { width: 13px; height: 131px; margin-top: 244px; }
.main .down { margin-top: auto; }
.main { padding-bottom: 0; }
.main b { width: 17px; height: 17px; background: #ddd; margin-top: 8px; flex: none; }
.props-bar .thumb { width: 14px; height: 411px; margin: 5px 0 auto; }

/* rulers and canvas */
.work { flex: 1; min-width: 0; display: flex; flex-direction: column; background: #ededed; border-left: 1px solid #ccc; }
.hruler { height: 21px; flex: none; display: flex; background: #fff; border-bottom: 1px solid #bbb; color: #999; font-size: 11px; line-height: 14px; overflow: hidden; }
.corner { width: 20px; }
.hscale { flex: 1; display: grid; grid-template-columns: repeat(27, 1fr); }
.hscale span, .hlast { border-left: 1px solid #bbb; padding-left: 3px; background: linear-gradient(to right, #bbb 1px, transparent 1px) 0 100% / 10% 4px repeat-x; }
.hlast { width: 19px; background: none; overflow: hidden; }
.stage { flex: 1; min-height: 0; display: flex; }
.vruler { width: 21px; flex: none; display: flex; flex-direction: column; background: #fff; border-right: 1px solid #bbb; color: #999; font-size: 11px; line-height: 14px; }
.vscale { flex: 1; display: grid; grid-template-rows: repeat(19, 1fr); }
.vscale span, .vfirst span { writing-mode: vertical-rl; transform: rotate(180deg); padding-top: 3px; border-top: 1px solid #bbb; width: 20px; background: linear-gradient(#bbb 1px, transparent 1px) 0 0 / 4px 10% repeat-y; }
.vfirst { height: 7px; overflow: hidden; display: flex; align-items: flex-end; }
.vlast { height: 8px; }
.view { flex: 1; min-width: 0; display: flex; flex-direction: column; }
.canvas { flex: 1; min-height: 0; overflow: hidden; padding-left: 256px; }
.artboard { width: 380px; background: #fff; border: 1px solid #ddd; border-width: 0 1px; padding-top: 26px; }
.artboard h2 { margin: 0; font-size: 18px; line-height: 22px; font-weight: normal; text-align: center; color: #000; }
.artboard h2:first-child { padding-left: 2px; }
.pics { display: grid; grid-template-columns: 162px 162px; column-gap: 32px; padding: 19px 0 0 10px; }
.pic { height: 189px; }
.pic i, .lines i { display: block; height: 1px; background: repeating-linear-gradient(to right, #444 0 1px, transparent 1px 3px); }
.pic i { width: 122px; margin: 0 0 15px 17px; }
.pic svg { margin-bottom: 35px; }
.pics + h2 { margin-top: 21px; padding-right: 3px; }
.lines { padding: 44px 0 0 57px; }
.lines i { width: 248px; margin-bottom: 17px; }
.form { margin: 82px 9px 0 10px; height: 80px; border: 1px solid #888; padding: 14px 18px; }
.field { height: 50px; border: 1px solid #888; padding: 8px 2px; font-size: 9px; line-height: 10px; color: #999; }
.view .thumb { width: 502px; height: 13px; margin-left: 259px; }
.view .right { margin-left: auto; }

/* style panel */
.props { width: 286px; flex: none; background: #f4f4f4; border-left: 1px solid #bbb; display: flex; flex-direction: column; }
.align { height: 33px; flex: none; display: flex; justify-content: space-between; align-items: center; padding: 0 10px 0 11px; }
.props-row { flex: 1; min-height: 0; display: flex; }
.props-body { flex: 1; min-width: 0; overflow: hidden; }
.props-bar { width: 17px; }
.head { margin: 0; height: 27px; display: flex; align-items: center; justify-content: space-between; padding: 0 11px; font-size: 11px; font-weight: normal; color: #444; background: #fff; border: 1px solid #d4d4d4; border-width: 1px 0; }
.head.top { border-top: 0; height: 25px; padding-bottom: 2px; }
.head.shut { background: #ebebeb; color: #777; }
.head.joined { border-top: 0; height: 26px; }
.group { padding: 14px 14px 15px; display: flex; flex-direction: column; gap: 7px; }
.info-wrap { padding: 14px 14px; }
.info { background: #fff; padding: 13px 12px 13px 15px; line-height: 17px; color: #666; }
.info a { display: block; color: #1558d0; margin-top: 7px; }
.row { display: flex; gap: 8px; }
.row .fontbtn { margin-left: -1px; }
.text-group { gap: 8px; padding-bottom: 16px; }
.box { height: 27px; background: #fff; border: 1px solid #bbb; border-radius: 3px; display: flex; align-items: center; flex: none; }
.box input { outline: 0; }
.arr { width: 23px; height: 100%; border-left: 1px solid #bbb; color: #555; font: 13px "DejaVu Sans", sans-serif; display: grid; place-items: center; flex: none; }
.tinybox { width: 37px; }
.tinybox input { width: 12px; }
.fontbtn { padding: 0 5px; font-size: 11px; color: #888; display: block; text-align: left; white-space: nowrap; }
.color { padding: 1px; }
.color .ic { width: 24px; display: grid; place-items: center; font-size: 12px; color: #777; }
.color button { flex: 1; height: 100%; border: 1px solid #bbb; color: #777; font-size: 11px; font-weight: bold; }
.color button + button { margin-left: 2px; }
.short { width: 131px; }
.size { width: 101px; padding-left: 5px; }
.size input { flex: 1; }
.unit { color: #bbb; padding-right: 6px; font-size: 12px; }
.unit.sm { font-size: 10px; }
.seg { display: flex; width: 236px; height: 23px; border: 1px solid #ccc; border-radius: 3px; }
.seg button { flex: 1; border-left: 1px solid #ccc; display: grid; place-items: center; color: #333; font-size: 12px; }
.seg button:first-child { border-left: 0; }
.stroke { width: 116px; padding-left: 5px; gap: 3px; }
.stroke input { flex: 1; font-size: 14px; }
.stroke .unit { padding-right: 3px; }
.solid { flex: 1; padding-left: 4px; gap: 4px; }
.solid select { flex: 1; appearance: none; font-size: 14px; color: #888; height: 100%; outline: 0; }
.props-foot { display: flex; flex: none; }
.props-foot .hbar { flex: 1; }
.props-foot b { width: 17px; background: #ddd; }
.props-foot .thumb { width: 17px; height: 13px; margin-left: 7px; }
.props-foot .right { margin-left: auto; }

/* taskbar */
.taskbar { height: 40px; flex: none; display: flex; align-items: center; gap: 4px; position: relative; background: linear-gradient(to right, #5a4b36, #65583d 15%, #5c5a34 30%, #6a6836 50%, #80703a 65%, #94763c 80%, #847340); color: #fff; }
.grass { position: absolute; inset: 0; }
.start, .app-btn, .tray { position: relative; }
.start { width: 48px; padding-left: 12px; }
.app-btn { width: 58px; height: 38px; display: grid; place-items: center; border: 1px solid transparent; }
.app-btn.open { background: rgba(235, 230, 215, .4); border-color: rgba(255, 255, 255, .6); }
.dg { font: bold 11px "Open Sans", sans-serif; fill: #fff; }
.tray { margin-left: auto; display: flex; align-items: center; gap: 8px; padding: 2px 18px 0 0; font-family: "Open Sans", sans-serif; font-size: 12px; line-height: 17px; }
.lang { margin: 0 4px 0 6px; }
.clock { text-align: center; }
```
